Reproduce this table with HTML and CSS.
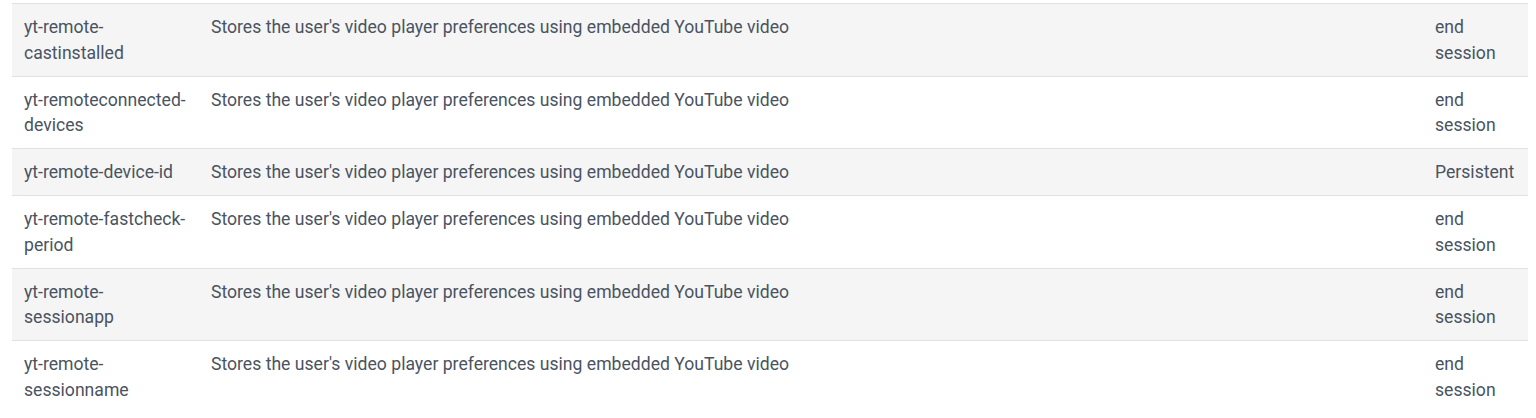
FILE: index.html
```html
<!DOCTYPE html>
<html lang="en">
<head>
<meta charset="utf-8">
<title>Cookies</title>
<link rel="stylesheet" href="styles.css">
</head>
<body>
<div class="wrap">
  <table class="cookies">
    <colgroup>
      <col class="c-name">
      <col class="c-desc">
      <col class="c-exp">
    </colgroup>
    <tbody>
      <tr><td>yt-remote-castinstalled</td><td>Stores the user's video player preferences using embedded YouTube video</td><td>end session</td></tr>
      <tr><td>yt-remoteconnected-devices</td><td>Stores the user's video player preferences using embedded YouTube video</td><td>end session</td></tr>
      <tr><td>yt-remote-device-id</td><td>Stores the user's video player preferences using embedded YouTube video</td><td>Persistent</td></tr>
      <tr><td>yt-remote-fastcheck-period</td><td>Stores the user's video player preferences using embedded YouTube video</td><td>end session</td></tr>
      <tr><td>yt-remote-sessionapp</td><td>Stores the user's video player preferences using embedded YouTube video</td><td>end session</td></tr>
      <tr><td>yt-remote-sessionname</td><td>Stores the user's video player preferences using embedded YouTube video</td><td>end session</td></tr>
    </tbody>
  </table>
</div>
</body>
</html>
```

FILE: styles.css
```css
html, body {
  margin: 0;
  padding: 0;
  background: #ffffff;
}
.wrap {
  padding: 3px 8px 0 12px;
}
.cookies {
  width: 1516px;
  border-collapse: collapse;
  table-layout: fixed;
  font-family: Roboto, "Helvetica Neue", Arial, sans-serif;
  font-size: 17.6px;
  line-height: 25.5px;
  color: #4a5361;
}
.c-name { width: 187px; }
.c-exp { width: 105px; }
.cookies td {
  padding: 11px 12px 9.5px 12px;
  border-top: 1px solid #dee2e6;
  vertical-align: top;
  text-align: left;
}
.cookies td:first-child {
  padding-right: 10px;
}
.cookies tr:nth-child(odd) td {
  background: #f5f5f5;
}
```
